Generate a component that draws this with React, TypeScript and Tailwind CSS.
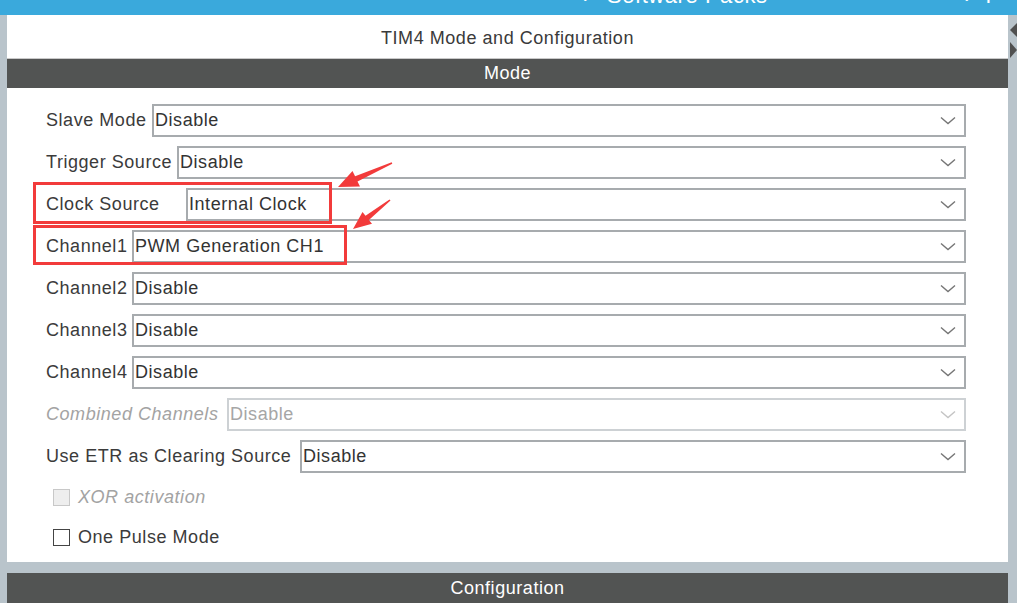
import React from 'react';

type Row = { label: string; value: string; labelW: string; disabled?: boolean };

const rows: Row[] = [
  { label: 'Slave Mode', value: 'Disable', labelW: 'w-[106px]' },
  { label: 'Trigger Source', value: 'Disable', labelW: 'w-[131px]' },
  { label: 'Clock Source', value: 'Internal Clock', labelW: 'w-[140px]' },
  { label: 'Channel1', value: 'PWM Generation CH1', labelW: 'w-[86px]' },
  { label: 'Channel2', value: 'Disable', labelW: 'w-[86px]' },
  { label: 'Channel3', value: 'Disable', labelW: 'w-[86px]' },
  { label: 'Channel4', value: 'Disable', labelW: 'w-[86px]' },
  { label: 'Combined Channels', value: 'Disable', labelW: 'w-[181px]', disabled: true },
  { label: 'Use ETR as Clearing Source', value: 'Disable', labelW: 'w-[254px]' },
];

const Chevron: React.FC<{ disabled?: boolean }> = ({ disabled }) => (
  <svg width="16" height="9" viewBox="0 0 16 9" className="shrink-0">
    <polyline
      points="1,1.5 8,7.5 15,1.5"
      fill="none"
      stroke={disabled ? '#c4c4c4' : '#767676'}
      strokeWidth="1.4"
    />
  </svg>
);

const SelectRow: React.FC<{ row: Row }> = ({ row }) => (
  <div className="flex items-center h-[33px]">
    <div
      className={`${row.labelW} shrink-0 ${row.disabled ? 'italic text-[#a3a3a3]' : 'text-[#3b3b3b]'}`}
    >
      {row.label}
    </div>
    <div
      className={`flex-1 h-[33px] flex items-center justify-between pl-[1px] pr-[8px] border-2 bg-white ${
        row.disabled ? 'border-[#cdd1d4] text-[#a6a6a6]' : 'border-[#a7abae] text-[#333]'
      }`}
    >
      <span>{row.value}</span>
      <Chevron disabled={row.disabled} />
    </div>
  </div>
);

export default function App() {
  return (
    <div
      className="relative w-[1017px] h-[603px] overflow-hidden bg-[#b9c4cb] text-[18px] tracking-[0.55px]"
      style={{ fontFamily: '"Liberation Sans", Arial, sans-serif' }}
    >
      {/* top bar, text cut off by the window edge */}
      <div className="h-[15px] bg-[#3aa9dc] overflow-hidden">
        <div className="-mt-[15px] flex text-white text-[22px] leading-[22px]">
          <div className="ml-[583px] w-[24px]">›</div>
          <div>Software Packs</div>
          <div className="ml-[197px] w-[21px]">›</div>
          <div>P</div>
        </div>
      </div>

      <div className="flex h-[588px]">
        <div className="w-[7px] shrink-0" />
        <div className="w-[1001px] shrink-0 flex flex-col">
          <div className="h-[547px] bg-white flex flex-col">
            <div className="h-[44px] pt-[3px] flex items-center justify-center border-b border-[#c9c9c9] text-[#3a3a3a]">
              TIM4 Mode and Configuration
            </div>
            <div className="h-[29px] bg-[#525453] text-white flex items-center justify-center">
              Mode
            </div>
            <div className="pl-[39px] pr-[42px] pt-[16px] flex flex-col gap-[9px]">
              {rows.map((r) => (
                <SelectRow key={r.label} row={r} />
              ))}
            </div>
            <div className="pl-[46px] mt-[12px] flex flex-col gap-[16px]">
              <div className="h-[24px] flex items-center gap-[8px]">
                <div className="w-[17px] h-[17px] border border-[#c8c8c8] bg-[#eeeeee]" />
                <span className="italic text-[#a3a3a3]">XOR activation</span>
              </div>
              <div className="h-[24px] flex items-center gap-[8px]">
                <div className="w-[17px] h-[17px] border border-[#444] bg-white" />
                <span className="text-[#3b3b3b]">One Pulse Mode</span>
              </div>
            </div>
          </div>
          <div className="h-[11px]" />
          <div className="h-[30px] bg-[#525453] text-white flex items-center justify-center">
            Configuration
          </div>
        </div>
        <div className="flex-1">
          <svg width="9" height="60" viewBox="0 0 9 60">
            <polygon points="2,15 9,8 9,22" fill="#505050" />
            <polygon points="2,27 2,43 9,35" fill="#505050" />
          </svg>
        </div>
      </div>

      {/* annotation boxes */}
      <div className="absolute left-[33px] top-[182px] w-[299px] h-[42px] border-[3px] border-[#f23b3b]" />
      <div className="absolute left-[33px] top-[225px] w-[314px] h-[40px] border-[3px] border-[#f23b3b]" />

      {/* annotation arrows */}
      <svg className="absolute left-0 top-0" width="1017" height="603" viewBox="0 0 1017 603">
        <polygon
          points="338,187 360,186.5 357.5,181.6 392.3,163.8 391.7,162.2 355.1,176.2 352.5,171"
          fill="#f23b3b"
        />
        <polygon
          points="353,229 372,223.8 368.9,220.1 390.5,200.6 389.5,199.4 365.5,215.7 362.5,212"
          fill="#f23b3b"
        />
      </svg>
    </div>
  );
}
